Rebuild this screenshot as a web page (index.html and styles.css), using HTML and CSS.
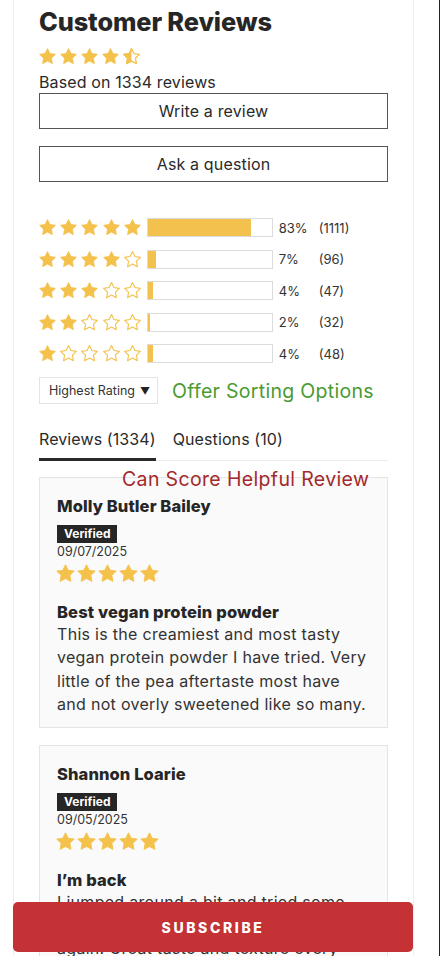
FILE: index.html
```html
<!DOCTYPE html>
<html lang="en">
<head>
<meta charset="utf-8">
<title>Customer Reviews</title>
<link rel="stylesheet" href="styles.css">
</head>
<body>
<svg class="defs" width="0" height="0" aria-hidden="true">
  <defs>
    <symbol id="star" viewBox="0 0 24 24">
      <polygon points="12,2 15.09,8.26 22,9.27 17,14.14 18.18,21.02 12,17.77 5.82,21.02 7,14.14 2,9.27 8.91,8.26" stroke-linejoin="round"/>
    </symbol>
    <clipPath id="lefthalf"><rect x="0" y="0" width="12" height="24"/></clipPath>
  </defs>
</svg>
<div class="frame">
  <h1 class="title">Customer Reviews</h1>
  <div class="stars stars-summary">
    <svg class="st full"><use href="#star"/></svg>
    <svg class="st full"><use href="#star"/></svg>
    <svg class="st full"><use href="#star"/></svg>
    <svg class="st full"><use href="#star"/></svg>
    <svg class="st half" viewBox="0 0 24 24"><polygon class="ol" points="12,2 15.09,8.26 22,9.27 17,14.14 18.18,21.02 12,17.77 5.82,21.02 7,14.14 2,9.27 8.91,8.26"/><polygon class="fl" clip-path="url(#lefthalf)" points="12,2 15.09,8.26 22,9.27 17,14.14 18.18,21.02 12,17.77 5.82,21.02 7,14.14 2,9.27 8.91,8.26"/></svg>
  </div>
  <p class="based">Based on 1334 reviews</p>
  <button class="btn btn-write">Write a review</button>
  <button class="btn btn-ask">Ask a question</button>

  <div class="dist">
    <div class="row">
      <div class="stars stars-row">
        <svg class="st full"><use href="#star"/></svg><svg class="st full"><use href="#star"/></svg><svg class="st full"><use href="#star"/></svg><svg class="st full"><use href="#star"/></svg><svg class="st full"><use href="#star"/></svg>
      </div>
      <div class="bar"><div class="fill" style="width:83%"></div></div>
      <span class="pct">83%</span><span class="cnt">(1111)</span>
    </div>
    <div class="row">
      <div class="stars stars-row">
        <svg class="st full"><use href="#star"/></svg><svg class="st full"><use href="#star"/></svg><svg class="st full"><use href="#star"/></svg><svg class="st full"><use href="#star"/></svg><svg class="st empty"><use href="#star"/></svg>
      </div>
      <div class="bar"><div class="fill" style="width:7%"></div></div>
      <span class="pct">7%</span><span class="cnt">(96)</span>
    </div>
    <div class="row">
      <div class="stars stars-row">
        <svg class="st full"><use href="#star"/></svg><svg class="st full"><use href="#star"/></svg><svg class="st full"><use href="#star"/></svg><svg class="st empty"><use href="#star"/></svg><svg class="st empty"><use href="#star"/></svg>
      </div>
      <div class="bar"><div class="fill" style="width:4%"></div></div>
      <span class="pct">4%</span><span class="cnt">(47)</span>
    </div>
    <div class="row">
      <div class="stars stars-row">
        <svg class="st full"><use href="#star"/></svg><svg class="st full"><use href="#star"/></svg><svg class="st empty"><use href="#star"/></svg><svg class="st empty"><use href="#star"/></svg><svg class="st empty"><use href="#star"/></svg>
      </div>
      <div class="bar"><div class="fill" style="width:2%"></div></div>
      <span class="pct">2%</span><span class="cnt">(32)</span>
    </div>
    <div class="row">
      <div class="stars stars-row">
        <svg class="st full"><use href="#star"/></svg><svg class="st empty"><use href="#star"/></svg><svg class="st empty"><use href="#star"/></svg><svg class="st empty"><use href="#star"/></svg><svg class="st empty"><use href="#star"/></svg>
      </div>
      <div class="bar"><div class="fill" style="width:4%"></div></div>
      <span class="pct">4%</span><span class="cnt">(48)</span>
    </div>
  </div>

  <div class="sortline">
    <div class="select">Highest Rating <span class="caret">&#9660;</span></div>
    <span class="note-green">Offer Sorting Options</span>
  </div>

  <div class="tabs">
    <span class="tab active">Reviews (1334)</span>
    <span class="tab">Questions (10)</span>
  </div>

  <div class="reviews">
    <span class="note-red">Can Score Helpful Review</span>
    <article class="card">
      <h3 class="name">Molly Butler Bailey</h3>
      <span class="badge">Verified</span>
      <div class="date">09/07/2025</div>
      <div class="stars stars-card">
        <svg class="st full"><use href="#star"/></svg><svg class="st full"><use href="#star"/></svg><svg class="st full"><use href="#star"/></svg><svg class="st full"><use href="#star"/></svg><svg class="st full"><use href="#star"/></svg>
      </div>
      <h4 class="rtitle">Best vegan protein powder</h4>
      <p class="body">This is the creamiest and most tasty vegan protein powder I have tried. Very little of the pea aftertaste most have and not overly sweetened like so many.</p>
    </article>
    <article class="card">
      <h3 class="name">Shannon Loarie</h3>
      <span class="badge">Verified</span>
      <div class="date">09/05/2025</div>
      <div class="stars stars-card">
        <svg class="st full"><use href="#star"/></svg><svg class="st full"><use href="#star"/></svg><svg class="st full"><use href="#star"/></svg><svg class="st full"><use href="#star"/></svg><svg class="st full"><use href="#star"/></svg>
      </div>
      <h4 class="rtitle">I’m back</h4>
      <p class="body">I jumped around a bit and tried some other brands but this one is my go-to again. Great taste and texture every single time.</p>
    </article>
  </div>
</div>
<button class="subscribe">SUBSCRIBE</button>
</body>
</html>
```

FILE: styles.css
```css
* { box-sizing: border-box; }
html, body { margin: 0; padding: 0; }
body {
  width: 440px;
  min-height: 100vh;
  border-right: 1px solid #222;
  background: #fff;
  font-family: Inter, "Noto Sans", Arial, sans-serif;
  color: #2a2a2a;
}
.defs { position: absolute; width: 0; height: 0; overflow: hidden; }
.frame {
  margin-left: 13px;
  width: 401px;
  min-height: 1200px;
  border-left: 1px solid #eeeeee;
  border-right: 1px solid #eeeeee;
  padding: 0 25px 60px 25px;
}
.title {
  margin: 0;
  padding-top: 6px;
  font-size: 25.3px;
  line-height: 31px;
  font-weight: 800;
  letter-spacing: -0.1px;
  color: #262626;
}
.stars { display: flex; }
.st { display: block; }
.st.full { fill: #f4c14b; stroke: #f4c14b; stroke-width: 1; }
.st.empty { fill: none; stroke: #f4c14b; stroke-width: 1.4; }
.st.half .ol { fill: #fff; stroke: #f4c14b; stroke-width: 1.6; stroke-linejoin: round; }
.st.half .fl { fill: #f4c14b; stroke: #f4c14b; stroke-width: 1; }
.stars-summary { margin-top: 10px; gap: 2px; margin-left: -1px; }
.stars-summary .st { width: 19px; height: 19px; }
.based {
  margin: 6px 0 0 0;
  font-size: 16px;
  line-height: 20px;
  letter-spacing: 0.12px;
  color: #2a2a2a;
}
.btn {
  display: block;
  width: 100%;
  height: 36px;
  background: #fff;
  border: 1.5px solid #555;
  font-family: inherit;
  font-size: 16px;
  letter-spacing: 0.15px;
  color: #2a2a2a;
  padding: 0;
  cursor: pointer;
}
.btn-write { margin-top: 1px; }
.btn-ask { margin-top: 17px; }
.dist {
  margin-top: 36px;
  display: flex;
  flex-direction: column;
  gap: 12.5px;
}
.row {
  display: flex;
  align-items: center;
  height: 19px;
}
.stars-row { gap: 2.2px; margin-left: -1px; }
.stars-row .st { width: 19px; height: 19px; }
.bar {
  margin-left: 5px;
  width: 126px;
  height: 19px;
  border: 1px solid #dcdcdc;
  background: #fff;
}
.fill { height: 100%; background: #f2c14e; }
.pct {
  margin-left: 6px;
  width: 40px;
  font-size: 13px;
  color: #333;
}
.cnt { font-size: 13px; color: #333; }
.sortline {
  margin-top: 14px;
  display: flex;
  align-items: center;
}
.select {
  width: 119px;
  height: 27px;
  border: 1px solid #e3e3e3;
  display: flex;
  align-items: center;
  padding-left: 9px;
  font-size: 12.5px;
  color: #333;
}
.caret { font-size: 10px; margin-left: 5px; color: #222; }
.note-green {
  margin-left: 14px;
  font-size: 19.5px;
  color: #4a9b31;
  letter-spacing: 0.3px;
}
.tabs {
  margin-top: 21px;
  display: flex;
  gap: 17px;
  border-bottom: 1px solid #ececec;
}
.tab {
  font-size: 16px;
  line-height: 20px;
  letter-spacing: 0.1px;
  padding: 4px 0 9px 0;
  color: #2a2a2a;
}
.tab.active { border-bottom: 3px solid #2a2a2a; margin-bottom: -1px; }
.reviews {
  position: relative;
  margin-top: 16px;
  display: flex;
  flex-direction: column;
  gap: 17px;
}
.note-red {
  position: absolute;
  left: 83px;
  top: -9px;
  font-size: 19.5px;
  line-height: 22px;
  color: #a32a2c;
  letter-spacing: 0.35px;
}
.card {
  background: #fafafa;
  border: 1px solid #e4e4e4;
  padding: 17px 17px 10px 17px;
}
.name {
  margin: 0;
  font-size: 16.5px;
  line-height: 22px;
  font-weight: 800;
  letter-spacing: 0.1px;
  color: #262626;
}
.badge {
  display: inline-block;
  margin-top: 8px;
  height: 18px;
  line-height: 18px;
  padding: 0 7px;
  background: #262626;
  color: #fff;
  font-size: 12px;
  font-weight: 700;
}
.date {
  font-size: 12.5px;
  line-height: 18px;
  color: #333;
}
.stars-card { margin-top: 2px; gap: 0; margin-left: -2px; }
.stars-card .st { width: 21px; height: 21px; }
.rtitle {
  margin: 17px 0 0 0;
  font-size: 16.5px;
  line-height: 22px;
  font-weight: 800;
  letter-spacing: 0.15px;
  color: #262626;
}
.body {
  margin: 0;
  font-size: 16px;
  line-height: 23.4px;
  letter-spacing: 0.3px;
  color: #333;
}
.subscribe {
  position: fixed;
  left: 13px;
  top: 902px;
  width: 400px;
  height: 50px;
  border: none;
  border-radius: 5px;
  background: #c43235;
  color: #fff;
  font-family: inherit;
  font-size: 14px;
  font-weight: 800;
  letter-spacing: 2.6px;
  padding: 0;
}
```
